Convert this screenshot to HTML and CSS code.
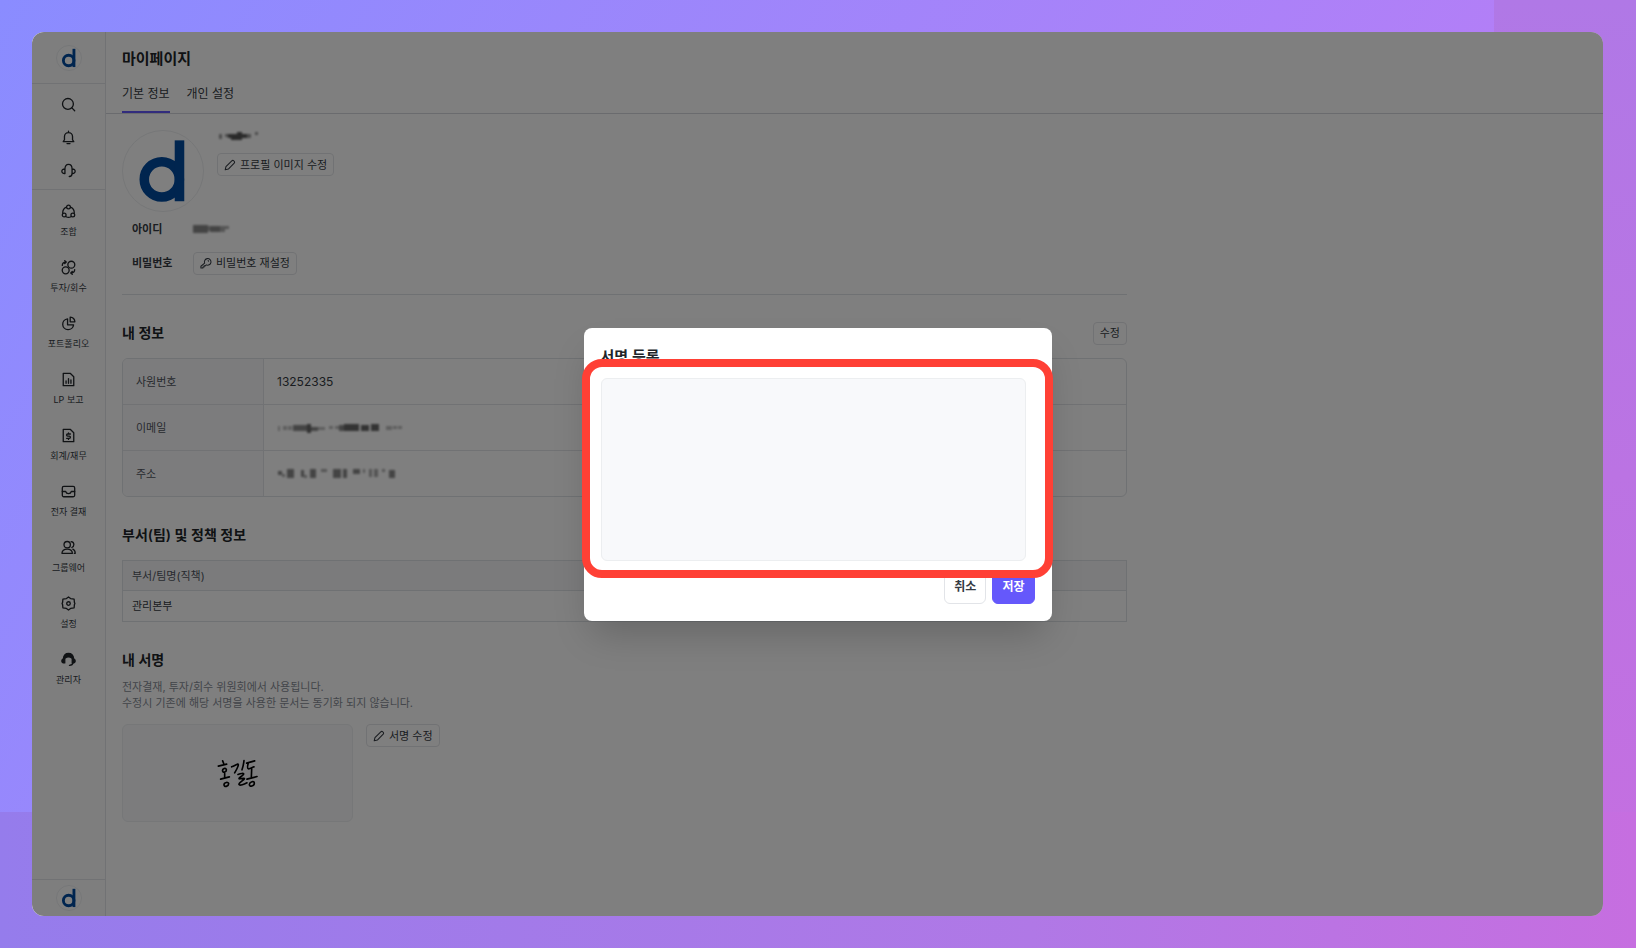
FILE: index.html
```html
<!DOCTYPE html>
<html lang="ko">
<head>
  <meta charset="UTF-8" />
  <meta name="viewport" content="width=device-width, initial-scale=1.0"/>
  <title>마이페이지</title>
  <link rel="stylesheet" href="styles.css">
</head>
<body>

  <!-- shared symbols -->
  <svg class="defs" width="0" height="0">
    <symbol id="logo" viewBox="0 0 82 82">
      <circle cx="39.8" cy="49.6" r="18" fill="none" stroke="#004a9f" stroke-width="9.8"/>
      <rect x="53" y="9.600" width="9.8" height="62.4" fill="#004a9f"/>
    </symbol>
    <symbol id="pencil" viewBox="0 0 16 16">
      <path d="M1.600 14.400l1-4.200 7.800-7.800a1.800 1.800 0 0 1 2.600 0l.6.600a1.800 1.800 0 0 1 0 2.600l-7.800 7.800z" />
    </symbol>
  </svg>

  <div class="stage">
    <div class="window">

      <!-- Sidebar -->
      <aside class="sidebar">
        <a class="sidebar-logo" href="#"><svg class="logo-small"><use href="#logo"/></svg></a>
        <div class="sidebar-tools">
          <button class="tool" aria-label="검색">
            <svg viewBox="0 0 16 16"><circle cx="7.4" cy="7.4" r="5.8"/><path d="M11.6 11.6l3 3"/></svg>
          </button>
          <button class="tool" aria-label="알림">
            <svg viewBox="0 0 16 16"><path d="M2.4 12.4h11.2l-1.3-2V7a4.3 4.3 0 0 0-8.6 0v3.4zM6.4 14.5h3.2M8 1.2v1.4"/></svg>
          </button>
          <button class="tool" aria-label="고객지원">
            <svg viewBox="0 0 16 16"><path d="M4.2 6.4C4.2 3.200 5.600 1.400 8 1.400s3.800 1.800 3.800 5M4.200 6.400v4.800C2.300 11.400.9 10.400.9 8.800s1.400-2.600 3.300-2.400zM11.800 6.400v4.800c1.900.2 3.300-.8 3.300-2.400s-1.400-2.600-3.300-2.400zM11.800 11.200c0 2.200-1 3.200-3 3.200"/></svg>
          </button>
        </div>
        <nav class="menu">
          <a class="menu-item" href="#">
            <svg viewBox="0 0 16 16"><circle cx="8" cy="3.2" r="2"/><circle cx="3.4" cy="11.8" r="2"/><circle cx="12.6" cy="11.8" r="2"/><path d="M5.800 3.400C3.300 4.400 1.800 6.200 1.800 9.800M10.200 3.400c2.500 1 4 2.800 4 6.400M5.400 13.600c1.700.9 3.500.9 5.200 0"/></svg>
            조합
          </a>
          <a class="menu-item" href="#">
            <svg viewBox="0 0 16 16"><circle cx="11" cy="5" r="3.7"/><circle cx="5" cy="11" r="3.7"/><path d="M1.4 5.800c0-2.400 1.2-3.600 3.800-3.600M4 .7l1.600 1.500L4 3.800M14.600 10.200c0 2.400-1.200 3.600-3.800 3.600M12 12.300l-1.600 1.500 1.600 1.500"/></svg>
            투자/회수
          </a>
          <a class="menu-item" href="#">
            <svg viewBox="0 0 16 16"><path d="M7 3a5.800 5.800 0 1 0 6.400 6.400H7zM9.800 1.200a5.400 5.400 0 0 1 5 5h-5z"/></svg>
            포트폴리오
          </a>
          <a class="menu-item" href="#">
            <svg viewBox="0 0 16 16"><path d="M2.400 1.400h7.400l3.800 3.600v9.600H2.400zM5.400 9.600v2.400M8 7v5M10.600 8.400V12"/></svg>
            LP 보고
          </a>
          <a class="menu-item" href="#">
            <svg viewBox="0 0 16 16"><path d="M2.400 1.400h7.400l3.800 3.600v9.600H2.400zM10 6.400H7.100a1.100 1.100 0 0 0 0 2.300h1.800a1.100 1.100 0 0 1 0 2.300H6M8 5.200v1.200M8 11v1.200"/></svg>
            회계/재무
          </a>
          <a class="menu-item" href="#">
            <svg viewBox="0 0 16 16"><rect x="1.4" y="2.6" width="13.2" height="11" rx="1.6"/><path d="M1.400 8h3.600c.4 1.400 1.400 2.200 3 2.200s2.600-.8 3-2.200h3.600"/></svg>
            전자 결재
          </a>
          <a class="menu-item" href="#">
            <svg viewBox="0 0 16 16"><circle cx="6.600" cy="5" r="3.400"/><path d="M1 14.200c.2-3 2.200-4.400 5.600-4.400s5.400 1.400 5.600 4.400zM10.800 1.800c2 .2 2.900 1.500 2.900 3.100s-.8 2.600-2.100 3.100M12.600 9.800c1.700.7 2.500 2.100 2.600 4.400h-1"/></svg>
            그룹웨어
          </a>
          <a class="menu-item" href="#">
            <svg viewBox="0 0 16 16"><path d="M8 1l2.200 1.700 3.800.7.300 3.400L14.800 8l-.5 1.200-.3 3.400-3.800.7L8 15l-2.200-1.700-3.800-.7-.3-3.400L1.200 8l.5-1.200L2 3.400l3.800-.7z"/><circle cx="8" cy="8" r="1.900"/></svg>
            설정
          </a>
          <a class="menu-item" href="#">
            <svg viewBox="0 0 16 16"><path d="M3 7.600a5 5 0 0 1 10 0M13 11c-.4 2.200-1.800 3.200-4 3.200"/><path d="M2.600 7C3 3.200 5 1.400 8 1.400s5 1.800 5.400 5.600L11.400 6.400C9.800 4.800 6.200 4.800 4.600 6.400z" fill="currentColor"/><path d="M4 7.400v4.200C2 12 .9 11 .9 9.500S2 7.200 4 7.400zM12 7.400v4.200c2 .4 3.100-.6 3.100-2.100S14 7.200 12 7.400z" fill="currentColor"/></svg>
            관리자
          </a>
        </nav>
        <a class="sidebar-bottom" href="#"><svg class="logo-small"><use href="#logo"/></svg></a>
      </aside>

      <!-- Page -->
      <main class="page">
        <header class="page-header">
          <h1>마이페이지</h1>
          <div class="tabs">
            <a class="tab active" href="#">기본 정보</a>
            <a class="tab" href="#">개인 설정</a>
          </div>
        </header>

        <div class="content">
          <section class="profile">
            <div class="profile-top">
              <svg class="avatar"><use href="#logo"/></svg>
              <div class="profile-side">
                <svg class="mosaic" width="44" height="12" viewBox="0 0 44 12">
                  <path fill="#999" d="M2 4h3v5H2zM38 2h3v3h-3zM8 4h6v3H8zM30 4h4v4h-4z"/>
                  <path fill="#555" d="M11 4h19v4H11zM20 2h5v8h-5zM14 8h6v2h-6z"/>
                </svg>
                <button class="btn"><svg><use href="#pencil"/></svg>프로필 이미지 수정</button>
              </div>
            </div>
            <div class="field">
              <span class="field-label">아이디</span>
              <svg class="mosaic" width="40" height="12" viewBox="0 0 40 12">
                <path fill="#888" d="M0 2h15v8H0zM17 3h10v6H17z"/>
                <path fill="#aaa" d="M15 3h2v5h-2zM27 3h5v6h-5zM32 3h4v3h-4z"/>
              </svg>
            </div>
            <div class="field">
              <span class="field-label">비밀번호</span>
              <button class="btn">
                <svg viewBox="0 0 16 16"><path d="M6.200 8.200a4.400 4.400 0 1 1 2.200 2.300L7 11.800H5.400v1.500H3.900v1.300H1.200v-2.300z"/><path d="M10.800 4.900l.6.600"/></svg>비밀번호 재설정
              </button>
            </div>
          </section>

          <section class="section">
            <div class="section-head">
              <h2>내 정보</h2>
              <button class="btn">수정</button>
            </div>
            <table class="info">
              <tr><th scope="row">사원번호</th><td>13252335</td></tr>
              <tr>
                <th scope="row">이메일</th>
                <td>
                  <svg class="mosaic" width="126" height="12" viewBox="0 0 126 12">
                    <path fill="#bbb" d="M1 4h2v5H1zM6 4h4v4H6zM11 4h4v4h-4zM40 5h8v3h-8zM52 4h4v3h-4zM58 4h4v3h-4zM109 4h6v4h-6zM116 4h4v3h-4zM121 4h4v3h-4z"/>
                    <path fill="#888" d="M16 3h14v6H16zM34 5h7v4h-7zM62 3h5v6h-5z"/>
                    <path fill="#666" d="M30 2h4v9h-4zM67 2h15v7H67zM84 3h8v6h-8zM94 2h8v7h-8z"/>
                  </svg>
                </td>
              </tr>
              <tr>
                <th scope="row">주소</th>
                <td>
                  <svg class="mosaic" width="126" height="12" viewBox="0 0 126 12">
                    <path fill="#888" d="M1 3h4v4H1zM10 1h7v9h-7zM24 2h3v7h-3zM33 1h6v9h-6zM56 1h8v9h-8zM66 1h4v9h-4zM76 1h7v5h-7zM112 2h6v8h-6z"/>
                    <path fill="#aaa" d="M44 1h6v3h-6zM27 7h3v3h-3zM86 1h2v4h-2zM92 1h3v8h-3zM97 1h4v8h-4zM105 1h3v3h-3zM5 6h3v3H5z"/>
                  </svg>
                </td>
              </tr>
            </table>
          </section>

          <section class="section">
            <div class="section-head"><h2>부서(팀) 및 정책 정보</h2></div>
            <table class="dept">
              <thead><tr><th scope="col">부서/팀명(직책)</th></tr></thead>
              <tbody><tr><td>관리본부</td></tr></tbody>
            </table>
          </section>

          <section class="section">
            <div class="section-head"><h2>내 서명</h2></div>
            <p class="hint">전자결재, 투자/회수 위원회에서 사용됩니다.<br>수정시 기존에 해당 서명을 사용한 문서는 동기화 되지 않습니다.</p>
            <div class="sign-row">
              <div class="sign-box">
                <svg class="ink" width="42" height="31" viewBox="320 750 126 92" role="img" aria-label="홍길동">
                  <path d="M337 758l3 8M324 774l25-6M337 789c-2-8 10-12 11-5s-9 11-11 5M343 796v12M331 813l26-7M341 830c0-8 14-10 14-3s-14 12-14 3M364 776c8-3 14-7 18-8s2 8-9 26M401 757c-1 9-2 17-6 28M383 799c8-3 18-5 17-1s-14 10-14 13 18-3 16 1-18 12-16 17 16-1 24-5M409 765l24-7M414 764c-3 11-3 17 0 18s10-3 17-6M424 783l-1 24M410 813l30-8M417 829c1-9 15-12 15-4s-15 13-15 4"/>
                </svg>
              </div>
              <button class="btn"><svg><use href="#pencil"/></svg>서명 수정</button>
            </div>
          </section>
        </div>
      </main>

      <!-- Signature dialog -->
      <div class="overlay">
        <div class="modal" role="dialog" aria-labelledby="modal-title">
          <h2 id="modal-title">서명 등록</h2>
          <canvas class="pad"></canvas>
          <div class="modal-actions">
            <button class="modal-btn">취소</button>
            <button class="modal-btn primary">저장</button>
          </div>
          <div class="highlight"></div>
        </div>
      </div>

    </div>
  </div>

</body>
</html>
```
FILE: styles.css
```css
* {
  margin: 0;
  padding: 0;
  box-sizing: border-box;
}

body {
  font-family: Inter, "Noto Sans CJK KR", sans-serif;
  font-size: 11px;
  line-height: 16px;
  color: #343a42;
}

a {
  color: inherit;
  text-decoration: none;
}

button {
  font: inherit;
  color: inherit;
  cursor: pointer;
}

svg {
  fill: none;
  stroke: currentColor;
  stroke-linejoin: round;
  stroke-linecap: round;
}

.defs {
  position: absolute;
}

symbol#logo {
  stroke: none;
}

/* Purple backdrop with a darker strip on the right and at the bottom */
.stage {
  display: flex;
  min-height: 100vh;
  padding: 32px 33px 32px 32px;
  background:
    linear-gradient(90deg, #957cec, #b078e6 63%, #c66ee0) bottom / 100% 136px no-repeat,
    linear-gradient(#b078e6, #c66ee0) right / 142px 100% no-repeat,
    linear-gradient(120deg, #8a8cff, #bb7cf5 85%);
}

.window {
  position: relative;
  display: flex;
  flex: 1;
  border-radius: 12px;
  background: #fff;
  overflow: hidden;
}

/* Sidebar */
.sidebar {
  display: flex;
  flex-direction: column;
  width: 74px;
  background: #fcfcfd;
  border-right: 1px solid #e2e4e8;
}

.sidebar-logo,
.sidebar-bottom {
  display: flex;
  align-items: center;
  justify-content: center;
}

.sidebar-logo {
  height: 52px;
  border-bottom: 1px solid #e2e4e8;
}

.sidebar-bottom {
  height: 37px;
  margin-top: auto;
  border-top: 1px solid #e2e4e8;
}

.logo-small {
  width: 26px;
  height: 26px;
  border: 1px solid #eceef0;
  border-radius: 50%;
  background: #fff;
}

.sidebar-tools {
  display: flex;
  flex-direction: column;
  align-items: center;
  gap: 1px;
  padding: 4px 0 3px;
  border-bottom: 1px solid #e2e4e8;
}

.tool {
  display: flex;
  align-items: center;
  justify-content: center;
  width: 32px;
  height: 32px;
  border: none;
  background: none;
}

.tool svg,
.menu-item svg {
  width: 15px;
  height: 15px;
  color: #212529;
  stroke-width: 1.4;
}

.menu {
  display: flex;
  flex-direction: column;
  gap: 22px;
  padding-top: 14px;
}

.menu-item {
  display: flex;
  flex-direction: column;
  align-items: center;
  gap: 6px;
  height: 34px;
  font-size: 9px;
  line-height: 13px;
}

/* Header */
.page {
  flex: 1;
}

.page-header {
  height: 82px;
  padding: 17px 16px 0;
  border-bottom: 1px solid #d4d7dc;
}

h1,
h2 {
  color: #212529;
}

h1 {
  font-size: 15px;
  line-height: 20px;
}

.tabs {
  display: flex;
  gap: 17px;
  padding-top: 12px;
}

.tab {
  height: 32px;
  font-size: 12px;
  line-height: 26px;
}

.tab.active {
  border-bottom: 2px solid #6558fb;
}

.content {
  max-width: 1037px;
  padding: 16px;
}

/* Buttons */
.btn {
  display: inline-flex;
  align-items: center;
  gap: 4px;
  height: 23px;
  padding: 0 6px;
  border: 1px solid #e2e4e8;
  border-radius: 4px;
  background: #fff;
}

.btn svg {
  width: 12px;
  height: 12px;
  stroke-width: 1.4;
}

/* Profile */
.profile {
  display: flex;
  flex-direction: column;
  padding-bottom: 14px;
  border-bottom: 1px solid #dfe2e6;
}

.profile-top {
  display: flex;
  gap: 13px;
}

.avatar {
  width: 82px;
  height: 82px;
  border: 1px solid #eceef0;
  border-radius: 50%;
}

.profile-side {
  display: flex;
  flex-direction: column;
  align-items: flex-start;
  gap: 11px;
}

.field {
  display: flex;
  align-items: center;
  height: 34px;
  padding-left: 10px;
}

.field-label {
  width: 61px;
  font-weight: 600;
}

.mosaic {
  display: block;
  stroke: none;
  filter: blur(1px);
}

/* Sections */
.section {
  padding-top: 26px;
}

.section-head {
  display: flex;
  align-items: center;
  justify-content: space-between;
  height: 24px;
  margin-bottom: 13px;
}

h2 {
  font-size: 14px;
  font-weight: 600;
  line-height: 20px;
}

table {
  width: 100%;
  border-spacing: 0;
  text-align: left;
}

th {
  font-weight: 400;
}

.info {
  border: 1px solid #dfe2e6;
  border-radius: 6px;
  overflow: hidden;
}

.info th,
.info td {
  height: 46px;
  padding: 0 13px;
  border-top: 1px solid #e2e4e8;
}

.info tr:first-child th,
.info tr:first-child td {
  height: 45px;
  border-top: none;
}

.info th {
  width: 141px;
  color: #50555e;
  background: #f8f9fa;
  border-right: 1px solid #e2e4e8;
}

.info td {
  font-size: 12px;
}

.dept {
  border: 1px solid #dfe2e6;
}

.dept th,
.dept td {
  height: 30px;
  padding: 0 9px;
}

.dept th {
  color: #50555e;
  background: #f6f7f8;
  border-bottom: 1px solid #dfe2e6;
}

/* Signature */
.hint {
  margin: -6px 0 13px;
  color: #868b94;
}

.sign-row {
  display: flex;
  align-items: flex-start;
  gap: 13px;
}

.sign-box {
  display: flex;
  align-items: center;
  justify-content: center;
  width: 231px;
  height: 98px;
  border: 1px solid #eceef0;
  border-radius: 6px;
  background: #f8f9fb;
}

.ink {
  stroke: #000;
  stroke-width: 5;
}

/* Dialog */
.overlay {
  position: absolute;
  inset: 0;
  display: flex;
  align-items: center;
  justify-content: center;
  background: rgba(0, 0, 0, 0.5);
}

.modal {
  position: relative;
  width: 468px;
  padding: 19px 17px 17px;
  border-radius: 8px;
  background: #fff;
  box-shadow: 0 20px 36px -8px rgba(0, 0, 0, 0.2);
}

.modal h2 {
  font-size: 15px;
}

.pad {
  display: block;
  width: 425px;
  height: 183px;
  margin: 11px 0 10px;
  border: 1px solid #eceef0;
  border-radius: 6px;
  background: #f8f9fb;
}

.modal-actions {
  display: flex;
  justify-content: flex-end;
  gap: 6px;
}

.modal-btn {
  height: 33px;
  padding: 0 9px;
  border: 1px solid #e2e4e8;
  border-radius: 6px;
  background: #fff;
  font-size: 12px;
  font-weight: 600;
}

.modal-btn.primary {
  border-color: #6558fb;
  background: #6558fb;
  color: #fff;
}

/* Red frame round the drawing area */
.highlight {
  position: absolute;
  inset: 31px -1px 43px -2px;
  border: 8px solid #ff4035;
  border-radius: 20px;
  pointer-events: none;
}
```
